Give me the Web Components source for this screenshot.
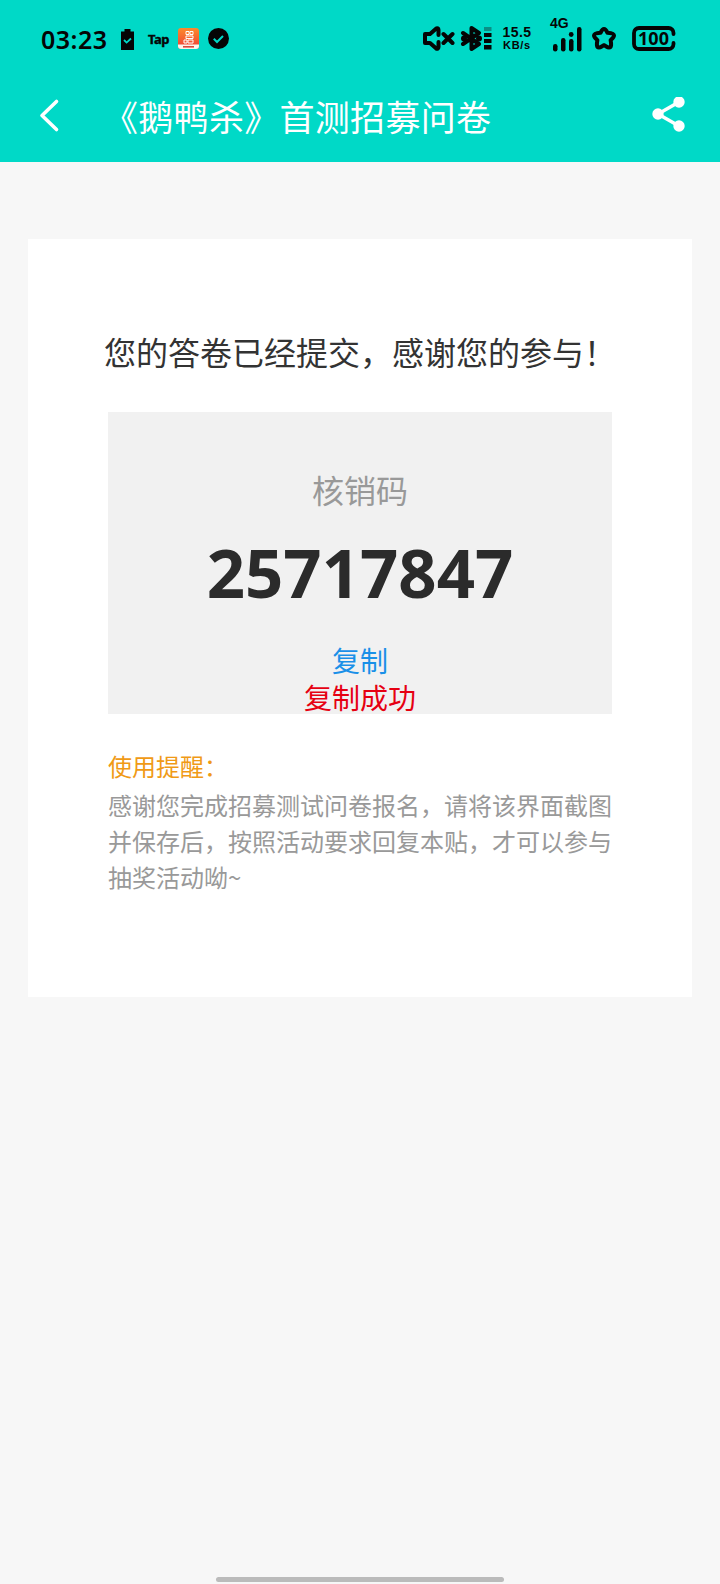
<!DOCTYPE html>
<html lang="zh">
<head>
<meta charset="utf-8">
<title>《鹅鸭杀》首测招募问卷</title>
<style>
	html, body {
		margin: 0;
		height: 1584px;
		overflow: hidden;
		background: #f7f7f7;
		font-family: "Noto Sans CJK SC", "Noto Sans", sans-serif;
	}
</style>
</head>
<body>
<survey-page>
	<status-bar slot="top"></status-bar>
	<app-bar slot="top" title="《鹅鸭杀》首测招募问卷"></app-bar>
	<result-card>
		<code-box code="25717847"></code-box>
		<usage-note>感谢您完成招募测试问卷报名，请将该界面截图并保存后，按照活动要求回复本贴，才可以参与抽奖活动呦~</usage-note>
	</result-card>
</survey-page>

<script>
class SurveyPage extends HTMLElement {
	constructor() {
		super();
		this.attachShadow({mode: 'open'});
		this.shadowRoot.innerHTML = `
			<style>
				:host {
					display: block;
					position: relative;
					height: 1584px;
					background: #f7f7f7;
				}
				header {
					background: #00d9c7;
				}
				main {
					padding: 77px 28px 0;
				}
				.home {
					position: absolute;
					left: 216px;
					bottom: 2px;
					width: 288px;
					height: 5px;
					border-radius: 3px;
					background: #bbb;
				}
			</style>
			<header><slot name="top"></slot></header>
			<main><slot></slot></main>
			<div class="home"></div>
		`;
	}
}

customElements.define('survey-page', SurveyPage);

class StatusBar extends HTMLElement {
	constructor() {
		super();
		this.attachShadow({mode: 'open'});
		this.shadowRoot.innerHTML = `
			<style>
				:host {
					display: flex;
					align-items: center;
					height: 77px;
					padding: 0 44px 0 41px;
					color: #050505;
					font-family: "Noto Sans", sans-serif;
				}
				svg { display: block; flex: none; }
				.time {
					width: 66px;
					font-size: 25px;
					font-weight: 600;
					letter-spacing: 0.5px;
					line-height: 30px;
				}
				.left, .right {
					display: flex;
					align-items: center;
				}
				.left { margin-left: 13px; }
				.right { margin-left: auto; }
				.tap {
					width: 21px;
					margin: 0 9px 0 13px;
					font: 700 13px/14px "Noto Sans", sans-serif;
					letter-spacing: -0.5px;
					-webkit-text-stroke: 0.4px #050505;
				}
				.speed {
					width: 32px;
					margin: 0 20px 0 8px;
					text-align: center;
					font-family: "Liberation Sans", sans-serif;
					font-weight: 700;
					line-height: 13px;
				}
				.speed div:first-child { font-size: 14px; letter-spacing: 0.5px; }
				.speed div:last-child { font-size: 11px; letter-spacing: 0.7px; }
				.signal {
					position: relative;
					width: 32px;
					height: 26px;
					margin: 0 6px 0 0;
				}
				.signal span {
					position: absolute;
					left: -3px;
					top: -10px;
					font: 700 14px/15px "Liberation Sans", sans-serif;
				}
				.battery {
					position: relative;
					margin-left: 15px;
					width: 44px;
					height: 25px;
				}
				.battery span {
					position: absolute;
					inset: 0;
					padding-right: 1px;
					text-align: center;
					font: 700 18px/25px "Noto Sans", sans-serif;
				}
			</style>
			<div class="time">03:23</div>
			<div class="left">
				<svg width="15" height="22" viewBox="0 0 15 22">
					<path d="M1 3.500h3.500V1h6v2.500H14V22H1z" fill="#050505"/>
					<path d="M4 12l2.600 2.600L11 10.500" fill="none" stroke="#00d9c7" stroke-width="1.800"/>
				</svg>
				<div class="tap">Tap</div>
				<svg width="21" height="21" viewBox="0 0 21 21">
					<defs>
						<linearGradient id="app" x1="0" y1="0" x2="0" y2="1">
							<stop offset="0" stop-color="#fb8b2c"/>
							<stop offset="1" stop-color="#ee3c38"/>
						</linearGradient>
					</defs>
					<rect width="21" height="21" rx="3" fill="url(#app)"/>
					<path d="M0 16.500h21V18a3 3 0 0 1-3 3H3a3 3 0 0 1-3-3z" fill="#fdf3ea"/>
					<rect x="5" y="18" width="11" height="1.600" fill="#d8483a"/>
					<path d="M8 3.500h3v3H8zM12 3.500h3v3h-3zM8 8h7v2.500H8zM6 12h3v3H6zM10 12h5v3h-5z" fill="none" stroke="#fff" stroke-width="1"/>
				</svg>
				<svg style="margin-left:9px" width="21" height="21" viewBox="0 0 21 21">
					<circle cx="10.500" cy="10.500" r="10.500" fill="#050505"/>
					<path d="M5.800 10.800l3.200 3.200 6-6" fill="none" stroke="#00d9c7" stroke-width="2"/>
				</svg>
			</div>
			<div class="right">
				<svg width="33" height="25" viewBox="0 0 33 25">
					<path d="M16.500 9V4c0-1.600-1.300-2.200-2.500-1.300L8 8H3v9h5l6 5.300c1.200.9 2.500.3 2.500-1.300v-5" fill="none" stroke="#050505" stroke-width="4" stroke-linejoin="round" stroke-linecap="round"/>
					<path d="M21.500 8l9 9M30.500 8l-9 9" stroke="#050505" stroke-width="4" stroke-linecap="round"/>
				</svg>
				<svg style="margin-left:4px" width="34" height="25" viewBox="0 0 34 25">
					<path d="M4 7l16 11-7.500 5V2l7.500 5L4 18" fill="none" stroke="#050505" stroke-width="4" stroke-linejoin="round" stroke-linecap="round"/>
					<circle cx="5" cy="12.500" r="3" fill="#050505"/>
					<circle cx="20" cy="12.500" r="3" fill="#050505"/>
					<rect x="25" y="1" width="7.500" height="4" fill="#0a8f85"/>
					<rect x="25" y="7" width="7.500" height="4" fill="#050505"/>
					<rect x="25" y="13" width="7.500" height="4" fill="#050505"/>
					<rect x="25" y="19" width="7.500" height="4.500" fill="#050505"/>
				</svg>
				<div class="speed"><div>15.5</div><div>KB/s</div></div>
				<div class="signal">
					<span>4G</span>
					<svg width="32" height="26" viewBox="0 0 32 26">
						<rect x="0" y="18" width="4.500" height="7.500" rx="2.200" fill="#050505"/>
						<rect x="8" y="12" width="4.500" height="13.500" rx="2.200" fill="#050505"/>
						<rect x="16" y="13" width="4.500" height="12.500" rx="2.200" fill="#050505"/>
						<circle cx="18.200" cy="8.500" r="2.400" fill="#050505"/>
						<rect x="24" y="1" width="4.500" height="24.500" rx="2.200" fill="#050505"/>
					</svg>
				</div>
				<svg width="26" height="25" viewBox="0 0 26 25">
					<path d="M13 3c1.500 0 2.400 1.400 3.500 3.800 3 .2 6.500.5 6.500 2.800 0 1.700-1.500 2.900-3.400 4.600.6 3 1.200 7.300-1.600 7.300-1.700 0-3.300-1.600-5-2.300-1.700.7-3.300 2.300-5 2.300-2.800 0-2.200-4.300-1.600-7.300C4.500 12.500 3 11.300 3 9.600c0-2.300 3.500-2.600 6.500-2.800C10.600 4.400 11.500 3 13 3z" fill="none" stroke="#050505" stroke-width="4" stroke-linejoin="round"/>
				</svg>
				<div class="battery">
					<svg width="44" height="25" viewBox="0 0 44 25">
						<path d="M41.500 8V7a5 5 0 0 0-5-5H7a5 5 0 0 0-5 5v11a5 5 0 0 0 5 5h29.500a5 5 0 0 0 5-5v-1" fill="none" stroke="#050505" stroke-width="3.800" stroke-linecap="round"/>
					</svg>
					<span>100</span>
				</div>
			</div>
		`;
	}
}

customElements.define('status-bar', StatusBar);

class AppBar extends HTMLElement {
	constructor() {
		super();
		this.attachShadow({mode: 'open'});
		this.shadowRoot.innerHTML = `
			<style>
				:host {
					display: flex;
					align-items: center;
					height: 85px;
					padding: 0 33px 8px 37px;
					box-sizing: border-box;
					color: #fff;
				}
				svg { display: block; flex: none; }
				h1 {
					margin: 0 0 0 42px;
					font-size: 35px;
					font-weight: 400;
					letter-spacing: 0.3px;
					line-height: 48px;
					white-space: nowrap;
				}
				.share { margin-left: auto; }
			</style>
			<svg width="24" height="36" viewBox="0 0 24 36">
				<path d="M19.500 3.500L5 17.500l14.500 14" fill="none" stroke="#fff" stroke-width="3.600" stroke-linecap="round" stroke-linejoin="round"/>
			</svg>
			<h1></h1>
			<svg class="share" width="36" height="38" viewBox="0 2 36 38">
				<path d="M28 7L7 19l21 12" fill="none" stroke="#fff" stroke-width="3.500"/>
				<circle cx="28" cy="7" r="5.700" fill="#fff"/>
				<circle cx="7" cy="19" r="5.700" fill="#fff"/>
				<circle cx="28" cy="31" r="5.700" fill="#fff"/>
			</svg>
		`;
		this.shadowRoot.querySelector('h1').textContent = this.getAttribute('title');
	}
}

customElements.define('app-bar', AppBar);

class ResultCard extends HTMLElement {
	constructor() {
		super();
		this.attachShadow({mode: 'open'});
		this.shadowRoot.innerHTML = `
			<style>
				:host {
					display: block;
					box-sizing: border-box;
					height: 758px;
					padding: 88px 80px 0;
					background: #fff;
				}
				h2 {
					margin: 0 -4px 37px;
					color: #333;
					font-size: 32px;
					font-weight: 400;
					line-height: 48px;
					white-space: nowrap;
				}
			</style>
			<h2>您的答卷已经提交，感谢您的参与！</h2>
			<slot></slot>
		`;
	}
}

customElements.define('result-card', ResultCard);

class CodeBox extends HTMLElement {
	constructor() {
		super();
		this.attachShadow({mode: 'open'});
		this.shadowRoot.innerHTML = `
			<style>
				:host {
					display: block;
					box-sizing: border-box;
					height: 302px;
					padding-top: 54px;
					background: #f1f1f1;
					text-align: center;
				}
				.label {
					color: #999;
					font-size: 32px;
					line-height: 46px;
				}
				.code {
					margin-top: 20px;
					color: #2b2b2b;
					font-family: "Noto Sans", sans-serif;
					font-size: 67px;
					font-weight: 700;
					line-height: 80px;
				}
				.copy, .done {
					font-size: 28px;
					line-height: 37px;
				}
				.copy { margin-top: 30px; color: #1a90e8; }
				.done { color: #e60012; }
			</style>
			<div class="label">核销码</div>
			<div class="code"></div>
			<div class="copy">复制</div>
			<div class="done">复制成功</div>
		`;
		this.shadowRoot.querySelector('.code').textContent = this.getAttribute('code');
	}
}

customElements.define('code-box', CodeBox);

class UsageNote extends HTMLElement {
	constructor() {
		super();
		this.attachShadow({mode: 'open'});
		this.shadowRoot.innerHTML = `
			<style>
				:host {
					display: block;
					margin-top: 34px;
					color: #999;
					font-size: 24px;
					line-height: 36px;
				}
				.head { color: #f09a16; margin-bottom: 3px; }
			</style>
			<div class="head">使用提醒：</div>
			<slot></slot>
		`;
	}
}

customElements.define('usage-note', UsageNote);
</script>
</body>
</html>
